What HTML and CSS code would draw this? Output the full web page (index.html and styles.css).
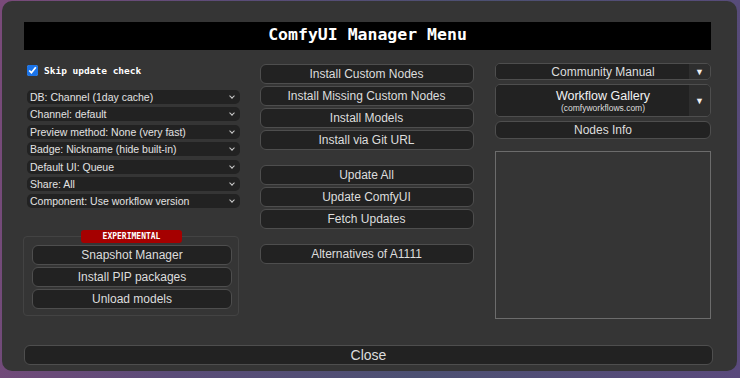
FILE: index.html
```html
<!DOCTYPE html>
<html lang="en">
<head>
    <meta charset="UTF-8">
    <title>ComfyUI Manager Menu</title>
    <link rel="stylesheet" href="styles.css">
</head>
<body>

    <!-- Dialogo principal -->
    <div class="manager-dialog">
        <h1 class="manager-title">ComfyUI Manager Menu</h1>

        <div class="manager-columns">
            <!-- Columna izquierda: opciones -->
            <div class="col col-left">
                <label class="skip-check">
                    <input type="checkbox" checked>
                    <span>Skip update check</span>
                </label>

                <div class="select-list">
                    <div class="fake-select">DB: Channel (1day cache)<span class="chev"></span></div>
                    <div class="fake-select">Channel: default<span class="chev"></span></div>
                    <div class="fake-select">Preview method: None (very fast)<span class="chev"></span></div>
                    <div class="fake-select">Badge: Nickname (hide built-in)<span class="chev"></span></div>
                    <div class="fake-select">Default UI: Queue<span class="chev"></span></div>
                    <div class="fake-select">Share: All<span class="chev"></span></div>
                    <div class="fake-select">Component: Use workflow version<span class="chev"></span></div>
                </div>

                <div class="experimental">
                    <span class="exp-label">EXPERIMENTAL</span>
                    <button class="cm-button">Snapshot Manager</button>
                    <button class="cm-button">Install PIP packages</button>
                    <button class="cm-button">Unload models</button>
                </div>
            </div>

            <!-- Columna central: acciones -->
            <div class="col col-mid">
                <div class="btn-group">
                    <button class="cm-button">Install Custom Nodes</button>
                    <button class="cm-button">Install Missing Custom Nodes</button>
                    <button class="cm-button">Install Models</button>
                    <button class="cm-button">Install via Git URL</button>
                </div>
                <div class="btn-group">
                    <button class="cm-button">Update All</button>
                    <button class="cm-button">Update ComfyUI</button>
                    <button class="cm-button">Fetch Updates</button>
                </div>
                <div class="btn-group">
                    <button class="cm-button">Alternatives of A1111</button>
                </div>
            </div>

            <!-- Columna derecha: enlaces -->
            <div class="col col-right">
                <div class="split-button">
                    <span class="split-main">Community Manual</span>
                    <span class="split-arrow">&#9660;</span>
                </div>
                <div class="split-button split-tall">
                    <span class="split-main">
                        <span class="gallery-name">Workflow Gallery</span>
                        <span class="gallery-url">(comfyworkflows.com)</span>
                    </span>
                    <span class="split-arrow">&#9660;</span>
                </div>
                <button class="cm-button nodes-info">Nodes Info</button>
                <div class="news-box"></div>
            </div>
        </div>

        <button class="cm-button close-button">Close</button>
    </div>

</body>
</html>
```

FILE: styles.css
```css
/* Estilos generales */
body {
    margin: 0;
    width: 740px;
    height: 378px;
    overflow: hidden;
    background: linear-gradient(100deg, #7a4a7a 0%, #5a4c78 30%, #4c5072 60%, #5a4a7c 100%);
    font-family: "Liberation Sans", Arial, sans-serif;
}

/* Dialogo */
.manager-dialog {
    box-sizing: border-box;
    margin: 1px 0 0 2px;
    width: 735px;
    height: 370px;
    padding: 21px 26px 0 22px;
    background-color: #353535;
    border-radius: 10px;
    display: flex;
    flex-direction: column;
}

.manager-title {
    margin: 0;
    height: 28px;
    line-height: 25px;
    background-color: #000;
    color: #fff;
    font-family: "DejaVu Sans Mono", monospace;
    font-size: 16.5px;
    font-weight: bold;
    text-align: center;
}

/* Columnas */
.manager-columns {
    display: flex;
    justify-content: space-between;
    margin-top: 13px;
    height: 268px;
}

.col {
    display: flex;
    flex-direction: column;
}

.col-left { width: 216px; }
.col-mid { width: 214px; margin-left: -2px; padding-top: 1px; gap: 15px; }
.col-right { width: 216px; }

/* Checkbox */
.skip-check {
    display: flex;
    align-items: center;
    gap: 6px;
    height: 14px;
    margin: 0 0 0 3px;
    color: #fff;
    font-family: "DejaVu Sans Mono", monospace;
    font-size: 9.5px;
    font-weight: bold;
}

.skip-check input {
    width: 11px;
    height: 11px;
    margin: 0;
    accent-color: #1a73e8;
}

/* Selects */
.select-list {
    display: flex;
    flex-direction: column;
    gap: 3.4px;
    margin: 13px 0 0 3px;
}

.fake-select {
    position: relative;
    height: 14px;
    line-height: 14px;
    padding-left: 3px;
    background-color: #222;
    border-radius: 5px;
    color: #e2e2e2;
    font-size: 10.5px;
    white-space: nowrap;
}

.chev {
    position: absolute;
    right: 6px;
    top: 4px;
    width: 3px;
    height: 3px;
    border-right: 1.2px solid #ccc;
    border-bottom: 1.2px solid #ccc;
    transform: rotate(45deg);
}

/* Botones */
.cm-button {
    display: block;
    box-sizing: border-box;
    width: 100%;
    height: 20px;
    margin: 0;
    padding: 0;
    background-color: #222;
    border: 1px solid #4e4e4e;
    border-radius: 6px;
    color: #ddd;
    font-family: "Liberation Sans", Arial, sans-serif;
    font-size: 12px;
    cursor: pointer;
}

.btn-group {
    display: flex;
    flex-direction: column;
    gap: 2px;
}

/* Caja experimental */
.experimental {
    position: relative;
    margin: 28px 1px 0 -1px;
    padding: 8px 6px 6px 8px;
    border: 1px solid #434343;
    border-radius: 4px;
    display: flex;
    flex-direction: column;
    gap: 2px;
}

.exp-label {
    position: absolute;
    top: -7px;
    left: 57px;
    width: 101px;
    height: 13px;
    line-height: 13px;
    background-color: #a50000;
    border-radius: 3px;
    color: #fff;
    font-family: "DejaVu Sans Mono", monospace;
    font-size: 8px;
    font-weight: bold;
    text-align: center;
}

/* Botones divididos */
.split-button {
    display: flex;
    box-sizing: border-box;
    height: 17px;
    margin-bottom: 4px;
    border: 1px solid #4e4e4e;
    border-radius: 5px;
    overflow: hidden;
    color: #ddd;
    font-size: 12px;
}

.split-main {
    flex: 1;
    padding-left: 21px;
    background-color: #222;
    display: flex;
    flex-direction: column;
    justify-content: center;
    align-items: center;
}

.split-arrow {
    width: 21px;
    background-color: #2e2e2e;
    font-size: 9px;
    display: flex;
    align-items: center;
    justify-content: center;
    color: #eee;
}

.split-tall {
    height: 33px;
}

.gallery-name {
    font-size: 12.5px;
    line-height: 14px;
    color: #f2f2f2;
}

.gallery-url {
    font-size: 8.5px;
    line-height: 10px;
}

.nodes-info {
    height: 18px;
}

.news-box {
    margin-top: 12px;
    height: 168px;
    box-sizing: border-box;
    border: 1px solid #6c6c6c;
}

/* Boton de cierre */
.close-button {
    margin-top: 14px;
    width: 689px;
    height: 20px;
    font-size: 14px;
}
```
